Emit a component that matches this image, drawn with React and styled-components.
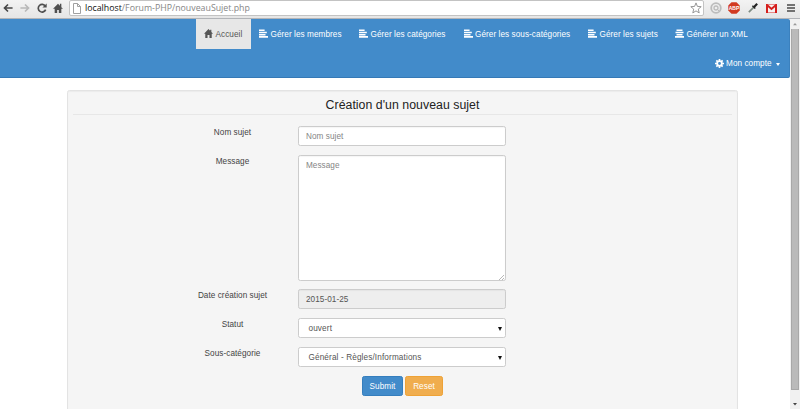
import React from "react";
import styled, { createGlobalStyle } from "styled-components";

const Global = createGlobalStyle`
  * { box-sizing: border-box; }
  html, body { margin: 0; height: 409px; overflow: hidden; background: #fff; }
  body, input, textarea, button { font-family: "Liberation Sans", Arial, sans-serif; }
`;

const Window = styled.div`
  display: flex;
  flex-direction: column;
  width: 800px;
  height: 409px;
  overflow: hidden;
`;

const Toolbar = styled.header`
  display: flex;
  align-items: center;
  flex: none;
  height: 19px;
  padding: 0 4px 2px 2px;
  background: linear-gradient(#f3f3f3, #e6e6e6 17px);
  border-bottom: 1px solid #b2b4b8;
`;

const ToolButton = styled.span`
  display: flex;
  justify-content: center;
  flex: none;
  width: ${(p) => p.$width}px;
  svg { display: block; }
`;

const AddressBar = styled.div`
  display: flex;
  align-items: center;
  flex: none;
  width: 635px;
  height: 16px;
  margin-left: 1px;
  padding: 0 1px 0 3px;
  background: #fff;
  border: 1px solid #c3c3c3;
  border-radius: 2px;
`;

const Url = styled.span`
  flex: 1;
  margin-left: 4px;
  font: 8.8px/13px "Open Sans", "Noto Sans", sans-serif;
  white-space: nowrap;
  color: #868686;
  b { font-weight: 400; color: #111; }
`;

const Extensions = styled.div`
  display: flex;
  align-items: center;
  margin-left: 4px;
`;

const Viewport = styled.div`
  display: flex;
  flex: 1;
  min-height: 0;
`;

const Page = styled.main`
  width: 790px;
  overflow: hidden;
`;

const Navbar = styled.nav`
  height: 59px;
  padding-left: 195.5px;
  background: #428bca;
  border-bottom: 1px solid #3579b6;
  border-right: 1px solid #3b81be;
  border-radius: 0 2px 2px 0;
`;

const NavRow = styled.div`
  display: flex;
  justify-content: ${(p) => (p.$end ? "flex-end" : "flex-start")};
  height: 29.5px;
  padding-right: ${(p) => (p.$end ? "8px" : "0")};
`;

const NavLink = styled.a`
  display: flex;
  align-items: center;
  flex: none;
  width: ${(p) => p.$width}px;
  padding: 1px 0 0 8.5px;
  font-size: 8.2px;
  letter-spacing: 0.06px;
  white-space: nowrap;
  color: ${(p) => (p.$active ? "#555" : "#fff")};
  background: ${(p) => (p.$active ? "#e7e7e7" : "transparent")};
  svg { flex: none; margin: 0 2.5px 1px 0; }
`;

const Caret = styled.i`
  margin-left: 4px;
  margin-top: 1px;
  border: solid transparent;
  border-width: 3px 2.5px 0;
  border-top-color: #fff;
`;

const Panel = styled.section`
  width: 671px;
  height: 340px;
  margin: 12px 0 0 67px;
  padding: 6px 5px;
  background: #f5f5f5;
  border: 1px solid #e3e3e3;
  border-radius: 2.5px;
  box-shadow: inset 0 1px 1px rgba(0, 0, 0, 0.04);
`;

const Title = styled.h1`
  height: 18px;
  margin: 0 0 11px;
  border-bottom: 1px solid #e7e7e7;
  font-size: 12.3px;
  font-weight: 400;
  line-height: 17px;
  letter-spacing: 0.04px;
  text-align: center;
  color: #222;
`;

const Form = styled.form`
  display: flex;
  flex-direction: column;
  gap: 9px;
`;

const Field = styled.div`
  display: grid;
  grid-template-columns: 117px 208px;
  column-gap: 7px;
  padding-left: 101px;
  height: ${(p) => p.$height || 20}px;
`;

const Label = styled.label`
  padding-top: 1px;
  font-size: 8.2px;
  line-height: 11px;
  letter-spacing: 0.05px;
  text-align: center;
  color: #444;
`;

const Input = styled.input`
  display: block;
  width: 208px;
  height: 20px;
  padding: ${(p) => (p.readOnly ? "1px" : "0")} 7px 0;
  font-size: 8.2px;
  letter-spacing: 0.05px;
  color: #555;
  background: ${(p) => (p.readOnly ? "#eee" : "#fff")};
  border: 1px solid #ccc;
  border-radius: 2.3px;
  box-shadow: inset 0 1px 1px rgba(0, 0, 0, 0.04);
  outline: 0;
  &::placeholder { color: #858585; }
`;

const TextArea = styled(Input).attrs({ as: "textarea" })`
  height: 126px;
  padding: 4px 7px;
  line-height: 12px;
  resize: none;
`;

const MessageBox = styled.div`
  position: relative;
`;

const Grip = styled.svg`
  position: absolute;
  right: 2px;
  bottom: 1px;
`;

const Select = styled.button`
  display: flex;
  align-items: center;
  justify-content: space-between;
  width: 208px;
  height: 20px;
  padding: 1px 3px 0 9.5px;
  font-size: 8.2px;
  letter-spacing: 0.13px;
  color: #555;
  background: #fff;
  border: 1px solid #ccc;
  border-radius: 2.3px;
  &::after {
    content: "";
    border: solid transparent;
    border-width: 4px 2px 0;
    border-top-color: #111;
  }
`;

const Actions = styled.div`
  display: flex;
  gap: 2px;
  padding-left: 289px;
`;

const Button = styled.button`
  width: ${(p) => p.$width}px;
  height: 20px;
  padding: 0;
  font-size: 8.2px;
  letter-spacing: 0.06px;
  color: #fff;
  background: ${(p) => (p.$warning ? "#f0ad4e" : "#428bca")};
  border: 1px solid ${(p) => (p.$warning ? "#eea236" : "#357ebd")};
  border-radius: 2.3px;
`;

const ScrollTrack = styled.aside`
  display: flex;
  flex-direction: column;
  align-items: center;
  width: 10px;
  background: #f1f1f1;
`;

const ScrollThumb = styled.div`
  width: 8px;
  height: 361px;
  background: #bababa;
  border: solid #a8a8a8;
  border-width: 0 1px 1px;
`;

const ScrollArrow = styled.svg`
  flex: none;
  width: 10px;
  height: ${(p) => p.$height}px;
`;

const Svg = ({ size = 12, box = 12, children, ...rest }) => (
  <svg width={size} height={size} viewBox={`0 0 ${box} ${box}`} {...rest}>{children}</svg>
);

const HomeIcon = () => (
  <Svg size={9}>
    <path fill="currentColor" d="M6 0 0 6.4h1.7V12h3V8h2.6v4h3V6.4H12L9.8 4V1H8.2v1.4z" />
  </Svg>
);

const LinesIcon = ({ centered }) => (
  <Svg size={9} box={9}>
    <path
      fill="currentColor"
      d={
        centered
          ? "M1.5.5h6v1.6h-6zM.5 2.7h8v1.6h-8zM1.5 4.9h6v1.5h-6zM0 7h9v1.7H0z"
          : "M0 .5h5.6v1.6H0zM0 2.7h7.8v1.6H0zM0 4.9h6.5v1.5H0zM0 7h9v1.7H0z"
      }
    />
  </Svg>
);

const GearIcon = () => (
  <Svg size={9}>
    <circle cx="6" cy="6" r="3.1" fill="none" stroke="currentColor" strokeWidth="2.4" />
    <path stroke="currentColor" strokeWidth="2.2" d="M6 0v2.5M6 9.5V12M0 6h2.5M9.5 6H12M1.8 1.8l1.7 1.7M8.5 8.5l1.7 1.7M10.2 1.8 8.5 3.5M3.5 8.5l-1.7 1.7" />
  </Svg>
);

const Arrow = ({ color, flip }) => (
  <Svg size={10} transform={flip ? "scale(-1 1)" : undefined}>
    <path fill="none" stroke={color} strokeWidth="2" d="M11.5 6H2M6 1.8 1.8 6 6 10.2" />
  </Svg>
);

const links = [
  { text: "Gérer les membres", width: 100 },
  { text: "Gérer les catégories", width: 104.5 },
  { text: "Gérer les sous-catégories", width: 124.5 },
  { text: "Gérer les sujets", width: 87 },
  { text: "Générer un XML", width: 90, centered: true },
];

const BrowserBar = () => (
  <Toolbar>
    <ToolButton $width={12}><Arrow color="#474747" /></ToolButton>
    <ToolButton $width={21}><Arrow color="#b8b8b8" flip /></ToolButton>
    <ToolButton $width={13}>
      <Svg size={10}>
        <path fill="none" stroke="#505050" strokeWidth="2" d="M10 3.8A4.6 4.6 0 1 0 10.4 8" />
        <path fill="#505050" d="M11.6.5v5H6.5z" />
      </Svg>
    </ToolButton>
    <ToolButton $width={20}>
      <Svg size={10}>
        <path fill="#505050" d="M6 1 0 7h2v5h3V8.5h2V12h3V7h2l-2-2V1H8.3v2.2z" />
      </Svg>
    </ToolButton>
    <AddressBar>
      <svg width="8" height="11" viewBox="0 0 8 11">
        <path fill="#fff" stroke="#a0a0a0" d="M.5.5h4l3 3v7h-7zM4.5.5v3h3" />
      </svg>
      <Url><b>localhost</b>/Forum-PHP/nouveauSujet.php</Url>
      <Svg size={12}>
        <path fill="#fff" stroke="#8a8a8a" strokeWidth=".9" d="m6 .9 1.4 3.5 3.8.3-2.9 2.4.9 3.8L6 8.9l-3.2 2 .9-3.8L.8 4.7l3.8-.3z" />
      </Svg>
    </AddressBar>
    <Extensions>
      <ToolButton $width={15}>
        <Svg size={12}>
          <circle cx="6" cy="6" r="4.8" fill="#eee" stroke="#bcbcbc" strokeWidth="1.8" />
          <circle cx="6" cy="6" r="2" fill="none" stroke="#bcbcbc" strokeWidth="1.3" />
          <path stroke="#bcbcbc" d="m7 7 3 3" />
        </Svg>
      </ToolButton>
      <ToolButton $width={22}>
        <Svg size={12}>
          <path fill="#d23a20" d="M3.5.3h5l3.2 3.2v5l-3.2 3.2h-5L.3 8.5v-5z" />
          <text x="6" y="7.9" fill="#fff" fontFamily="Liberation Sans" fontSize="5" fontWeight="700" textAnchor="middle">ABP</text>
        </Svg>
      </ToolButton>
      <ToolButton $width={16}>
        <Svg size={10}>
          <path stroke="#7d8a81" strokeWidth="2" d="m1 11 6-6" />
          <path stroke="#222" strokeWidth="2.6" d="m7 5 4-4" />
          <path stroke="#222" strokeWidth="1.6" d="m5.3 3.3 3.4 3.4" />
        </Svg>
      </ToolButton>
      <ToolButton $width={21}>
        <svg width="11" height="9" viewBox="0 0 11 9">
          <path fill="#f6f1f0" d="M0 0h11v9H0z" />
          <path fill="none" stroke="#d51f1d" strokeWidth="2" d="M1 9V1l4.5 4L10 1v8" />
          <path stroke="#d51f1d" strokeWidth=".6" d="M0 .3h11M0 8.7h11" />
        </svg>
      </ToolButton>
      <ToolButton $width={18}>
        <svg width="8" height="8" viewBox="0 0 8 8"><path stroke="#4a4a4a" strokeWidth="1.7" d="M0 1h8M0 4h8M0 7h8" /></svg>
      </ToolButton>
    </Extensions>
  </Toolbar>
);

export default function App() {
  return (
    <Window>
      <Global />
      <BrowserBar />
      <Viewport>
        <Page>
          <Navbar>
            <NavRow>
              <NavLink $width={55} $active><HomeIcon />Accueil</NavLink>
              {links.map((l) => (
                <NavLink key={l.text} $width={l.width}><LinesIcon centered={l.centered} />{l.text}</NavLink>
              ))}
            </NavRow>
            <NavRow $end>
              <NavLink $width={75}><GearIcon />Mon compte<Caret /></NavLink>
            </NavRow>
          </Navbar>
          <Panel>
            <Title>Création d'un nouveau sujet</Title>
            <Form>
              <Field>
                <Label>Nom sujet</Label>
                <Input placeholder="Nom sujet" />
              </Field>
              <Field $height={125}>
                <Label>Message</Label>
                <MessageBox>
                  <TextArea placeholder="Message" />
                  <Grip width="5" height="5" viewBox="0 0 5 5"><path stroke="#999" strokeWidth=".7" d="M0 5 5 0M3 5l2-2" /></Grip>
                </MessageBox>
              </Field>
              <Field>
                <Label>Date création sujet</Label>
                <Input value="2015-01-25" readOnly />
              </Field>
              <Field>
                <Label>Statut</Label>
                <Select type="button">ouvert</Select>
              </Field>
              <Field>
                <Label>Sous-catégorie</Label>
                <Select type="button">Général - Règles/Informations</Select>
              </Field>
              <Actions>
                <Button type="button" $width={41}>Submit</Button>
                <Button type="button" $width={38} $warning>Reset</Button>
              </Actions>
            </Form>
          </Panel>
        </Page>
        <ScrollTrack>
          <ScrollArrow $height={10} viewBox="0 0 10 10"><path fill="#999" d="M3 6.2 5 4l2 2.2z" /></ScrollArrow>
          <ScrollThumb />
          <ScrollArrow $height={19} viewBox="0 0 10 19"><path fill="#444" d="M3 13h4l-2 2.6z" /></ScrollArrow>
        </ScrollTrack>
      </Viewport>
    </Window>
  );
}
